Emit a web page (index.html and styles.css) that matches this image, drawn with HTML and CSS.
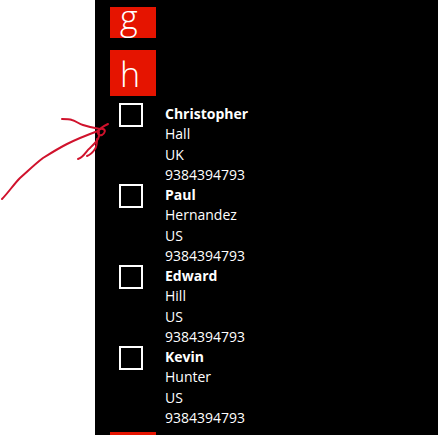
FILE: index.html
```html
<!DOCTYPE html>
<html lang="en">
<head>
<meta charset="utf-8">
<title>People list</title>
<link rel="stylesheet" href="styles.css">
</head>
<body>
<div class="page">
  <div class="margin"></div>
  <main class="panel">
    <div class="tile tile-g">g</div>
    <div class="tile tile-h">h</div>
    <div class="row">
      <span class="check"></span>
      <div class="info"><strong>Christopher</strong><span>Hall</span><span>UK</span><span>9384394793</span></div>
    </div>
    <div class="row">
      <span class="check"></span>
      <div class="info"><strong>Paul</strong><span>Hernandez</span><span>US</span><span>9384394793</span></div>
    </div>
    <div class="row">
      <span class="check"></span>
      <div class="info"><strong>Edward</strong><span>Hill</span><span>US</span><span>9384394793</span></div>
    </div>
    <div class="row">
      <span class="check"></span>
      <div class="info"><strong>Kevin</strong><span>Hunter</span><span>US</span><span>9384394793</span></div>
    </div>
    <div class="tile tile-next"></div>
  </main>
  <svg class="arrow" width="115" height="205" viewBox="0 0 115 205" fill="none" aria-hidden="true">
    <path d="M2 199C8 193 14 184 20 178C28 171 35 164 43 158C51 153 59 148 67 144C77 139 87 135 98 131"/>
    <path d="M62 119C66 119 69 119 72 120C76 121 79 124 83 125C89 127 94 128 100 129"/>
    <path d="M108 124C104 126 100 128 98 131C97 134 99 136 102 135C105 133 106 130 103 129C100 128 98 130 99 133"/>
    <path d="M99 136C98 141 95 143 90 148C86 151 84 157 78 159"/>
    <path d="M97 139C97 143 97 146 95 149C93 152 90 155 87 156"/>
  </svg>
</div>
</body>
</html>
```

FILE: styles.css
```css
html, body {
  margin: 0;
  padding: 0;
  background: #fff;
}

.page {
  position: relative;
  display: flex;
  width: 438px;
  height: 435px;
  overflow: hidden;
  font-family: "Open Sans", "Noto Sans", sans-serif;
}

.margin {
  flex: 0 0 95px;
  background: #fff;
}

.panel {
  flex: 1;
  display: flex;
  flex-direction: column;
  align-items: flex-start;
  padding: 7px 0 0 15px;
  background: #000;
  color: #fff;
  overflow: hidden;
}

.tile {
  flex: none;
  width: 46px;
  background: #e51400;
  color: #fff;
  font-size: 34px;
  font-weight: 300;
  padding-left: 10px;
  box-sizing: border-box;
}

.tile-g {
  height: 31px;
  line-height: 20px;
}

.tile-h {
  height: 46px;
  margin-top: 12px;
  margin-bottom: 7px;
  line-height: 48px;
}

.tile-next {
  height: 10px;
  margin-top: 5px;
}

.row {
  flex: none;
  display: flex;
  height: 81px;
  width: 100%;
}

.check {
  flex: none;
  width: 24px;
  height: 24px;
  margin-left: 9px;
  margin-right: 22px;
  border: 2px solid #fff;
  box-sizing: border-box;
}

.info {
  display: flex;
  flex-direction: column;
  padding-top: 1px;
  font-size: 14px;
  line-height: 20.3px;
}

.info strong {
  font-weight: 700;
}

.arrow {
  position: absolute;
  left: 0;
  top: 0;
}

.arrow path {
  stroke: #d0122c;
  stroke-width: 2;
  stroke-linecap: round;
  stroke-linejoin: round;
}
```
